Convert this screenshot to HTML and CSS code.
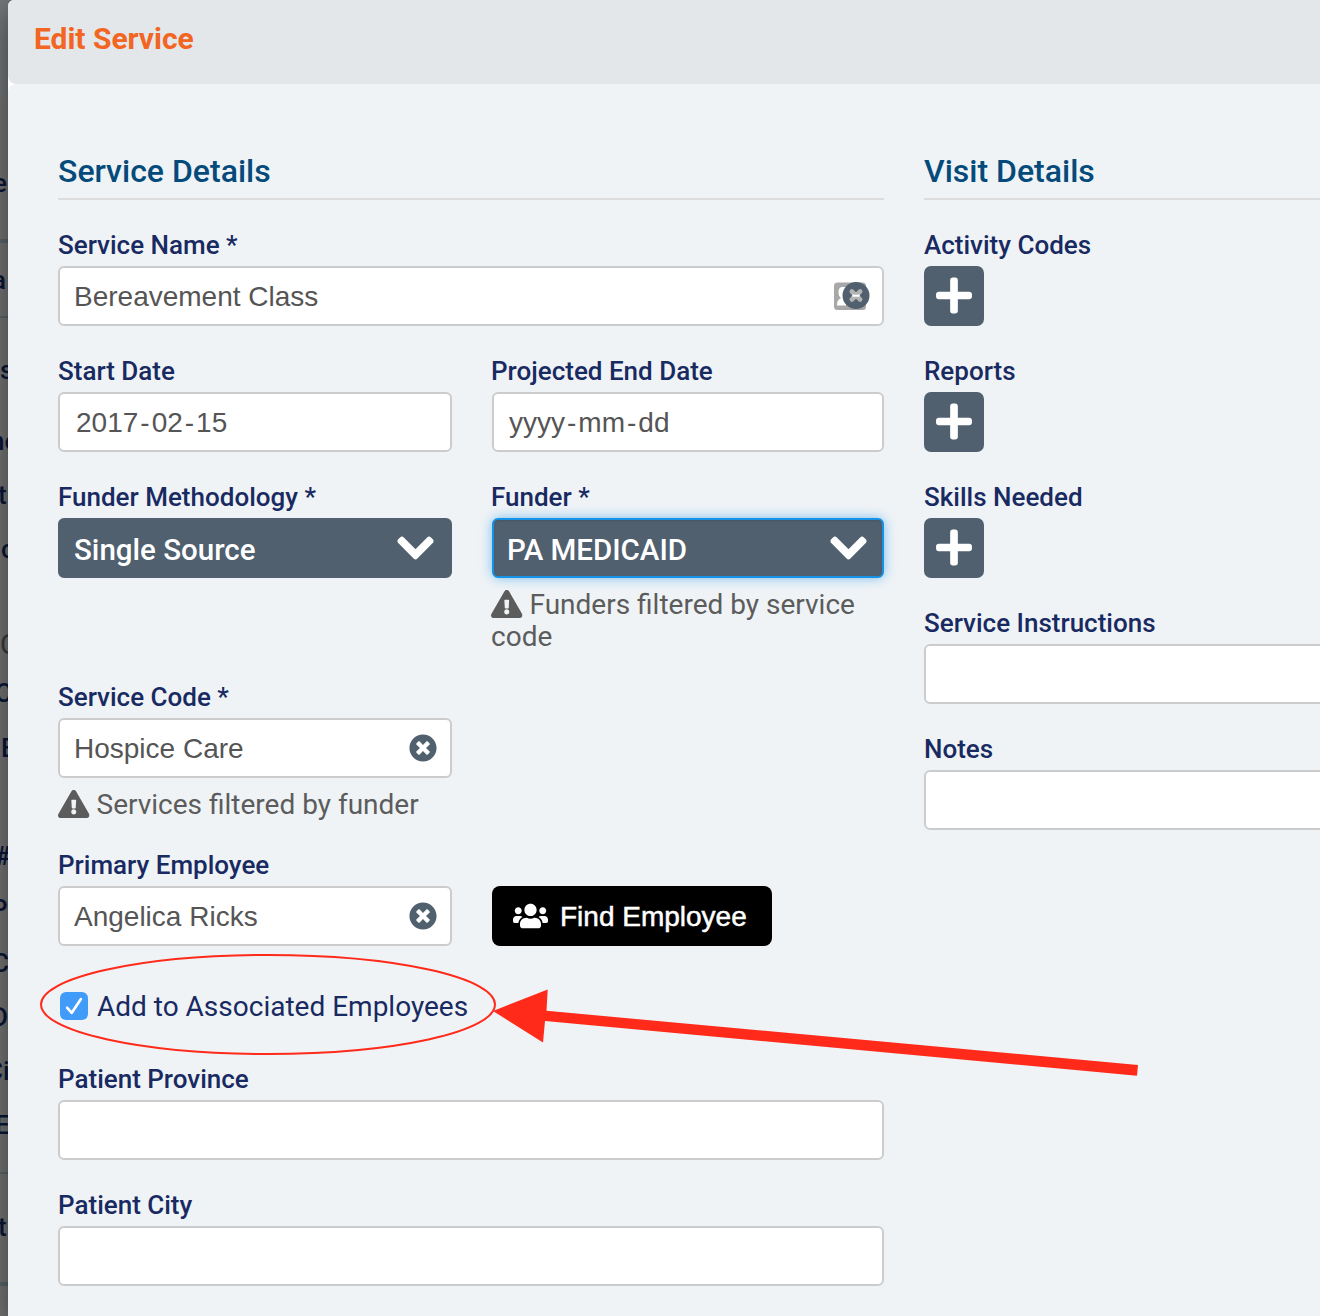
FILE: index.html
```html
<!DOCTYPE html>
<html lang="en">
<head>
<meta charset="utf-8">
<title>Edit Service</title>
<link rel="stylesheet" href="styles.css">
</head>
<body>
<svg class="defs" width="0" height="0" aria-hidden="true">
  <symbol id="plus" viewBox="0 0 448 512"><path d="M416 208H272V64c0-17.67-14.33-32-32-32h-32c-17.67 0-32 14.33-32 32v144H32c-17.67 0-32 14.33-32 32v32c0 17.67 14.33 32 32 32h144v144c0 17.67 14.33 32 32 32h32c17.67 0 32-14.33 32-32V304h144c17.67 0 32-14.33 32-32v-32c0-17.67-14.33-32-32-32z"/></symbol>
  <symbol id="chevron" viewBox="-10 0 468 512"><path d="M207.029 381.476L12.686 187.132c-9.373-9.373-9.373-24.569 0-33.941l22.667-22.667c9.357-9.357 24.522-9.375 33.901-.04L224 284.505l154.745-154.021c9.379-9.335 24.544-9.317 33.901.04l22.667 22.667c9.373 9.373 9.373 24.569 0 33.941L240.971 381.476c-9.373 9.372-24.569 9.372-33.942 0z" stroke="currentColor" stroke-width="20"/></symbol>
  <symbol id="clear" viewBox="0 0 512 512"><path d="M256 8C119 8 8 119 8 256s111 248 248 248 248-111 248-248S393 8 256 8zm121.6 313.1c4.7 4.7 4.7 12.3 0 17L338 377.6c-4.7 4.7-12.3 4.7-17 0L256 312l-65.1 65.6c-4.7 4.7-12.3 4.7-17 0L134.4 338c-4.7-4.7-4.7-12.3 0-17l65.6-65-65.6-65.1c-4.7-4.7-4.7-12.3 0-17l39.6-39.6c4.7-4.7 12.3-4.7 17 0l65 65.7 65.1-65.6c4.7-4.7 12.3-4.7 17 0l39.6 39.6c4.7 4.7 4.7 12.3 0 17L312 256l65.6 65.1z"/></symbol>
  <symbol id="warning" viewBox="0 0 576 512"><path d="M569.517 440.013C587.975 472.007 564.806 512 527.94 512H48.054c-36.937 0-59.999-40.055-41.577-71.987L246.423 23.985c18.467-32.009 64.72-31.951 83.154 0l239.94 416.028zM288 354c-25.405 0-46 20.595-46 46s20.595 46 46 46 46-20.595 46-46-20.595-46-46-46zm-43.673-165.346l7.418 136c.347 6.364 5.609 11.346 11.982 11.346h48.546c6.373 0 11.635-4.982 11.982-11.346l7.418-136c.375-6.874-5.098-12.654-11.982-12.654h-63.383c-6.884 0-12.356 5.78-11.981 12.654z"/></symbol>
  <symbol id="users" viewBox="0 0 640 512"><path d="M96 224c35.3 0 64-28.7 64-64s-28.7-64-64-64-64 28.7-64 64 28.7 64 64 64zm448 0c35.3 0 64-28.7 64-64s-28.7-64-64-64-64 28.7-64 64 28.7 64 64 64zm32 32h-64c-17.6 0-33.5 7.1-45.1 18.6 40.3 22.1 68.9 62 75.1 109.4h66c17.7 0 32-14.3 32-32v-32c0-35.3-28.7-64-64-64zm-256 0c61.9 0 112-50.1 112-112S381.9 32 320 32 208 82.1 208 144s50.1 112 112 112zm76.8 32h-8.3c-20.8 10-43.9 16-68.5 16s-47.6-6-68.5-16h-8.3C179.6 288 128 339.6 128 403.2V432c0 26.5 21.5 48 48 48h288c26.5 0 48-21.5 48-48v-28.8c0-63.6-51.6-115.2-115.2-115.2zm-223.7-13.4C161.5 263.1 145.6 256 128 256H64c-35.3 0-64 28.7-64 64v32c0 17.7 14.3 32 32 32h65.9c6.3-47.4 34.9-87.3 75.2-109.4z"/></symbol>
</svg>
<div class="app">
  <div class="backdrop" aria-hidden="true">
    <div class="bar"></div>
    <div class="row r1"><span class="n9">e</span></div>
    <div class="rule thick"></div>
    <div class="row r2"><span class="n8">a</span></div>
    <div class="rule"></div>
    <div class="row r3"><span>s</span></div>
    <div class="row r4"><span class="n10">ne</span></div>
    <div class="row"><span class="n2">t</span></div>
    <div class="row"><span class="p1">c</span></div>
    <div class="row r5"><span class="muted">C</span></div>
    <div class="row r6"><span class="n3">C</span></div>
    <div class="row"><span class="p1">E</span></div>
    <div class="row r7"><span class="n3">#</span></div>
    <div class="row"><span class="n7">P</span></div>
    <div class="row"><span class="n8">C</span></div>
    <div class="row"><span class="n7">D</span></div>
    <div class="row"><span class="n14">Ci</span></div>
    <div class="row"><span class="n3">E</span></div>
    <div class="row gap"></div>
    <div class="rule"></div>
    <div class="row r8"><span class="n2">t</span></div>
    <div class="rule thick"></div>
  </div>
  <main class="dialog">
    <header class="dialog-head"><h1>Edit Service</h1></header>
    <div class="dialog-body">
      <section class="details">
        <h2>Service Details</h2>
        <div class="field">
          <label>Service Name *</label>
          <div class="input"><span>Bereavement Class</span>
            <svg class="contact" width="36" height="30" viewBox="0 0 36 30"><rect y="1.500" width="32" height="27.500" rx="3.500" fill="#a8a8a8"/><path d="M3 24.500c0-4 1-6 4-7.500-2-1.500-2.500-3.500-2.500-6C4.500 7.500 6 6 8.500 6H12v18.500z" fill="#fff"/><circle cx="22" cy="14.500" r="13.500" fill="#50606f"/><path d="M17.800 10.500l8.400 8M26.200 10.500l-8.400 8" stroke="#b4b4b4" stroke-width="4.600" stroke-linecap="round"/><path d="M18.200 14.700h7.600" stroke="#fff" stroke-width="2"/></svg>
          </div>
        </div>
        <div class="pair">
          <div class="field"><label>Start Date</label><div class="input date"><span>2017</span><span>-</span><span>02</span><span>-</span><span>15</span></div></div>
          <div class="field"><label>Projected End Date</label><div class="input date"><span>yyyy</span><span>-</span><span>mm</span><span>-</span><span>dd</span></div></div>
        </div>
        <div class="pair">
          <div class="field"><label>Funder Methodology *</label><div class="select"><span>Single Source</span><svg class="chev"><use href="#chevron"/></svg></div></div>
          <div class="field"><label>Funder *</label><div class="select focus"><span>PA MEDICAID</span><svg class="chev"><use href="#chevron"/></svg></div>
            <p class="hint"><svg class="warn"><use href="#warning"/></svg>Funders filtered by service code</p></div>
        </div>
        <div class="pair">
          <div class="field"><label>Service Code *</label><div class="input"><span>Hospice Care</span><svg class="clear"><use href="#clear"/></svg></div>
            <p class="hint"><svg class="warn"><use href="#warning"/></svg>Services filtered by funder</p></div>
        </div>
        <div class="pair employee">
          <div class="field"><label>Primary Employee</label><div class="input"><span>Angelica Ricks</span><svg class="clear"><use href="#clear"/></svg></div></div>
          <button class="find"><svg class="users"><use href="#users"/></svg><span>Find Employee</span></button>
        </div>
        <div class="check"><span class="box"><svg width="28" height="28" viewBox="0 0 28 28"><path d="M7.200 15.800l4.600 5L20.800 7.200" fill="none" stroke="#fff" stroke-width="2.700" stroke-linecap="round" stroke-linejoin="round"/></svg></span><span>Add to Associated Employees</span></div>
        <div class="field"><label>Patient Province</label><div class="input"></div></div>
        <div class="field"><label>Patient City</label><div class="input"></div></div>
      </section>
      <section class="visit">
        <h2>Visit Details</h2>
        <div class="field"><label>Activity Codes</label><button class="add"><svg><use href="#plus"/></svg></button></div>
        <div class="field"><label>Reports</label><button class="add"><svg><use href="#plus"/></svg></button></div>
        <div class="field"><label>Skills Needed</label><button class="add"><svg><use href="#plus"/></svg></button></div>
        <div class="field"><label>Service Instructions</label><div class="input"></div></div>
        <div class="field"><label>Notes</label><div class="input"></div></div>
      </section>
    </div>
  </main>
  <svg class="markup" viewBox="0 0 1320 1316"><ellipse cx="268" cy="1004.500" rx="227" ry="49.500" fill="none" stroke="#ff2a1a" stroke-width="2"/><path d="M493 1011L547.700 989.500L546.500 1010.800L1138 1065L1137 1075.700L545 1021L543 1042.500z" fill="#ff2a1a"/></svg>
</div>
</body>
</html>
```
FILE: styles.css
```css
* { box-sizing: border-box; }
body { margin: 0; background: #727272; font-family: Roboto, "Liberation Sans", sans-serif; }
h1, h2, p { margin: 0; }
svg { flex: none; fill: currentColor; }
.defs { position: absolute; }
.app { position: relative; display: grid; grid-template-columns: 8px 1312px; height: 1316px; overflow: hidden; }

.backdrop { background: #757575; overflow: hidden; font: 500 26px/54px Roboto, sans-serif; color: #0b1738; }
.bar { height: 97px; background: #74767a; }
.row { height: 54px; white-space: nowrap; overflow: hidden; }
.row span { display: block; }
.rule { height: 2px; background: #5b666a; }
.rule.thick { height: 4px; background: #5b666a; }
.r1 { height: 142px; padding-top: 59px; }
.r2 { height: 73px; padding-top: 10px; }
.r3 { height: 96px; padding-top: 25px; }
.r4 { height: 54px; }
.r5 { height: 68px; padding-top: 42px; overflow: visible; }
.r6 { height: 77px; padding-top: 22px; }
.r7 { height: 107px; padding-top: 54px; }
.row.gap { height: 20px; }
.r8 { height: 108px; padding-top: 26px; }
.n2 { margin-left: -2px; }
.n3 { margin-left: -5px; }
.n7 { margin-left: -9px; }
.n8 { margin-left: -8px; }
.n9 { margin-left: -7px; }
.n10 { margin-left: -10px; }
.n14 { margin-left: -14px; }
.p1 { margin-left: 1px; }
.muted { color: #3a3a3a; font-weight: 400; font-size: 28px; }

.dialog { background: #fff; border-top-left-radius: 6px; box-shadow: 0 10px 30px rgba(0, 0, 0, .5); overflow: hidden; height: 1316px; }
.dialog-head { height: 84px; padding: 19px 26px; background: #e3e7ea; border-radius: 4px 0 0 8px; }
h1 { font-size: 30px; line-height: 40px; font-weight: 700; color: #f26522; letter-spacing: -.02px; }
.dialog-body { display: grid; grid-template-columns: 826px 480px; gap: 40px; height: 1232px; padding: 60px 0 0 50px; background: #eff3f6; border-top-left-radius: 8px; }
h2 { height: 56px; margin-bottom: 24px; border-bottom: 2px solid #dcdcdc; font-size: 32px; line-height: 54px; font-weight: 500; color: #044a7a; }
.field { margin-bottom: 24px; }
label { display: block; height: 42px; font-size: 26px; line-height: 42px; font-weight: 500; color: #182a61; }
.pair { display: grid; grid-template-columns: 394px 392px; column-gap: 40px; }
.pair .field + .field label, .pair .field + .field .hint { margin-left: -1px; }
.input, .select { display: flex; align-items: center; justify-content: space-between; height: 60px; border: 2px solid #ccc; border-radius: 6px; background: #fff; padding: 0 13px 0 14px; color: #555; font: 28px "Liberation Sans", Arial, sans-serif; }
.input span { padding-top: 2px; }
.input.date { justify-content: flex-start; gap: 2px; padding-left: 16px; }
.pair .field + .field .date { padding-left: 15px; }
.select { border-color: #50606f; background: #50606f; color: #fff; padding-right: 16px; padding-top: 3px; font: 500 29.5px Roboto, sans-serif; }
.select.focus { border-color: #1592e6; box-shadow: 0 0 12px rgba(21, 146, 230, .55), inset 0 1px 2px rgba(0, 0, 0, .1); padding-left: 13px; padding-right: 15px; }
.chev { width: 37px; height: 42px; margin-top: -3px; }
.clear { width: 28px; height: 28px; color: #50606f; margin-top: -1px; }
.contact { margin-right: -1px; }
.hint { padding-top: 11px; margin-bottom: -1px; font-size: 28px; line-height: 32px; color: #5c5c5c; }
.warn { width: 31.5px; height: 28px; margin-right: 7px; vertical-align: -4px; }
.find { display: flex; align-items: center; width: 280px; height: 60px; margin-top: 42px; padding: 0 0 0 21px; border: 0; border-radius: 8px; background: #000; color: #fff; font: 28px "Liberation Sans", Arial, sans-serif; -webkit-text-stroke: .5px; }
.find span { padding-top: 2px; }
.users { width: 35px; height: 28px; margin-right: 12px; }
.employee .field { margin-bottom: 0; }
.check { display: flex; align-items: center; gap: 9px; height: 72px; margin: 24px 0 16px; padding-left: 2px; font-size: 28px; color: #182a61; }
.box { display: flex; width: 28px; height: 28px; border-radius: 6px; background: #419bf9; }
.add { display: flex; align-items: center; justify-content: center; width: 60px; height: 60px; padding: 0 0 2px; border: 0; border-radius: 7px; background: #50606f; color: #fff; }
.add svg { width: 36px; height: 41px; }
.markup { position: absolute; inset: 0; width: 1320px; height: 1316px; pointer-events: none; }
```
